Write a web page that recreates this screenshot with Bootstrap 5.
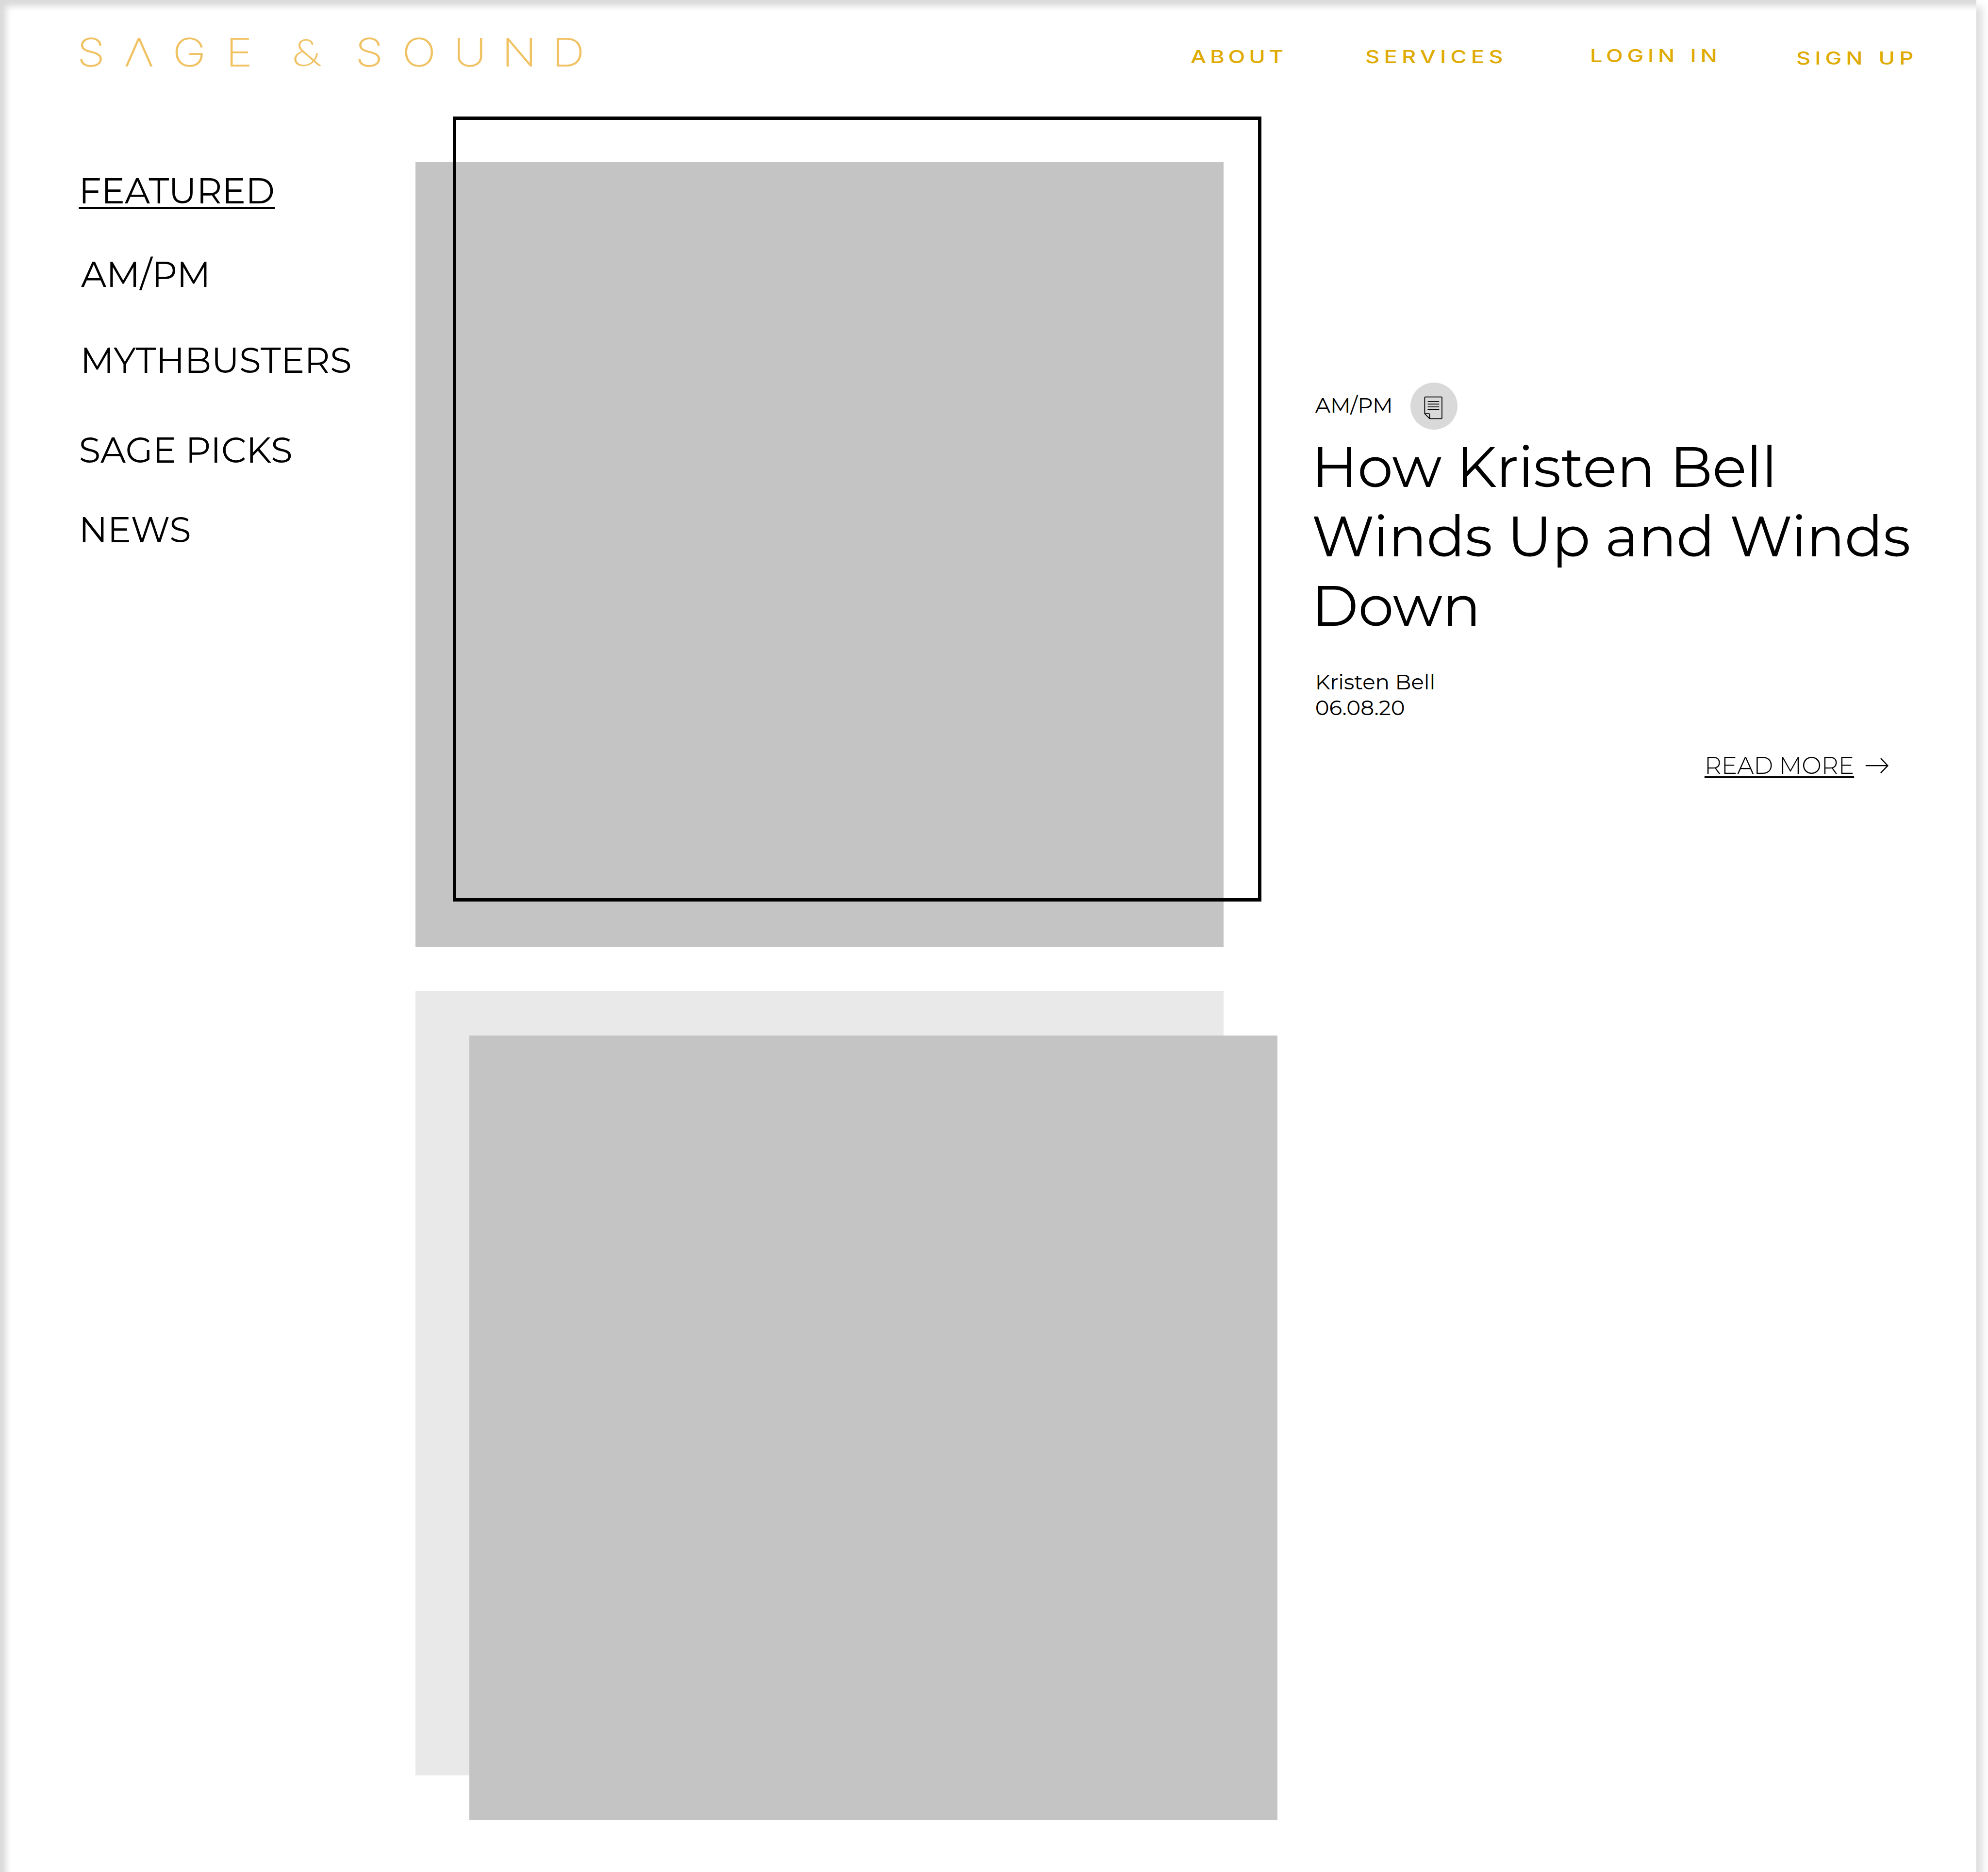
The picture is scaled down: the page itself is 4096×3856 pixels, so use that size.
<!DOCTYPE html>
<html lang="en">
<head>
<meta charset="utf-8">
<meta name="viewport" content="width=device-width, initial-scale=1">
<title>Sage &amp; Sound</title>
<link href="https://cdn.jsdelivr.net/npm/bootstrap@5.3.0/dist/css/bootstrap.min.css" rel="stylesheet">
<style>
  html { font-size: 80.789px; }
  body { font-family: Montserrat, Inter, "Liberation Sans", sans-serif; font-size: .54rem; line-height: .66rem; color: #000; background: #fff; height: 3856px; overflow: hidden; }
  .page-clip { height: 3856px; }
  .sheet { width: 50.4rem; height: 49rem; background: #fff; box-shadow: .15rem .17rem .2rem rgba(0,0,0,.15), inset .16rem .16rem .16rem rgba(0,0,0,.15); }
  .topbar { height: 2.97rem; }
  .brand { width: 13.2rem; height: 1.1rem; margin: .8rem 0 0 1.9rem; overflow: visible; }
  .menu-top { margin-left: 15.26rem; padding-top: 1.175rem; font: 500 .45rem/.5rem Inter, "Liberation Sans", sans-serif; }
  .menu-top .nav-link { padding: 0; color: #dfab00; white-space: nowrap; transform: scaleX(1.25); transform-origin: 0 0; letter-spacing: .09rem; }
  .menu-top .m-about { width: 4.46rem; margin-top: .03rem; letter-spacing: .077rem; }
  .menu-top .m-services { width: 5.736rem; margin-top: .03rem; }
  .menu-top .m-login { width: 5.254rem; word-spacing: .03rem; letter-spacing: .085rem; }
  .menu-top .m-signup { width: 3.1rem; margin-top: .06rem; letter-spacing: .088rem; word-spacing: .03rem; }
  .side { width: 10.6rem; padding: 1.345rem 0 0 2.01rem; font-size: .9rem; line-height: 1.1rem; }
  .side .nav-link { padding: 0; color: #000; }
  .side .s-ampm { margin: 1.03rem 0 0 .057rem; }
  .side .s-myth { margin: 1.09rem 0 0 .04rem; }
  .side .s-picks { margin-top: 1.19rem; }
  .side .s-news { margin-top: .935rem; }
  .side .current { text-decoration: underline; text-decoration-thickness: .05rem; text-underline-offset: .09rem; text-decoration-skip-ink: none; }
  .gallery { width: 22.85rem; gap: 1.11rem; }
  .photo-pair { display: grid; width: 21.57rem; height: 21.18rem; }
  .photo-pair > * { grid-area: 1 / 1; width: 20.6rem; height: 20.01rem; }
  .photo-pair > .outline { width: 20.62rem; border: .09rem solid #000; }
  .photo-pair.second { width: 21.975rem; height: 21.15rem; }
  .fill-mid { background: #c4c4c4; }
  .fill-pale { background: #e9e9e9; }
  .story { width: 16.5rem; padding-top: 6.78rem; }
  .kicker { height: 1.2rem; margin-left: .09rem; }
  .kicker .label { width: 2.43rem; margin-top: -.028rem; }
  .kind { width: 1.2rem; height: 1.2rem; }
  .headline { font-size: 1.44rem; line-height: 1.77rem; font-weight: 400; margin: .07rem 0 .725rem; }
  .byline { margin-left: .09rem; }
  .more { margin: .785rem 0 0 10.02rem; font-size: .6rem; font-weight: 300; line-height: .73rem; }
  .more a { color: #000; text-decoration: underline; text-decoration-thickness: .037rem; text-underline-offset: .06rem; text-decoration-skip-ink: none; }
  .more svg { width: .62rem; height: .4rem; margin-left: .28rem; }
</style>
</head>
<body>
<div class="page-clip overflow-hidden">
<div class="sheet">
  <header class="topbar d-flex align-items-start">
    <svg class="brand flex-shrink-0" viewBox="190 80 1320 110" role="img" aria-label="Sage &amp; Sound">
      <text transform="scale(1.17 1)" y="167.5" text-anchor="middle" font-family="Inter, Lato, sans-serif" font-weight="100" font-size="97" fill="#f0c264" stroke="#f0c264" stroke-width="2.6" x="199 303.4 413.2 521.5 599 669.6 735 805.5 913.7 1024.8 1132.5 1239.5">SΛGE <tspan font-family="Lato, sans-serif" font-weight="300" font-size="94" stroke="none">&amp;</tspan> SOUND</text>
    </svg>
    <nav class="menu-top nav flex-nowrap align-items-start">
      <a class="nav-link m-about" href="#">ABOUT</a>
      <a class="nav-link m-services" href="#">SERVICES</a>
      <a class="nav-link m-login" href="#">LOGIN IN</a>
      <a class="nav-link m-signup" href="#">SIGN UP</a>
    </nav>
  </header>
  <main class="d-flex align-items-start">
    <nav class="side nav flex-column flex-shrink-0 align-items-start">
      <a class="nav-link current" href="#">FEATURED</a>
      <a class="nav-link s-ampm" href="#">AM/PM</a>
      <a class="nav-link s-myth" href="#">MYTHBUSTERS</a>
      <a class="nav-link s-picks" href="#">SAGE PICKS</a>
      <a class="nav-link s-news" href="#">NEWS</a>
    </nav>
    <section class="gallery d-flex flex-column flex-shrink-0">
      <div class="photo-pair">
        <div class="fill-mid align-self-end"></div>
        <div class="outline ms-auto"></div>
      </div>
      <div class="photo-pair second">
        <div class="fill-pale"></div>
        <div class="fill-mid align-self-end ms-auto"></div>
      </div>
    </section>
    <article class="story flex-shrink-0">
      <div class="kicker d-flex align-items-center">
        <span class="label">AM/PM</span>
        <svg class="kind" viewBox="0 0 120 120" fill="none" stroke="#000" stroke-width="2.2" stroke-linejoin="round" stroke-linecap="round">
          <circle cx="60" cy="60" r="60" fill="#d9d9d9" stroke="none"/>
          <path d="M38 36.8H78.7Q80.4 36.8 80.4 38.5V90.3Q80.4 92 78.7 92H49L36.4 79.4V38.5Q36.4 36.8 38 36.8ZM36.4 79.4H47.3Q49 79.4 49 81.1V92"/>
          <path d="M44.8 48H72.6M44.8 55H72.6M44.8 62H72.6M44.8 69H72.6"/>
        </svg>
      </div>
      <h1 class="headline">How Kristen Bell<br>Winds Up and Winds<br>Down</h1>
      <div class="byline">Kristen Bell<br>06.08.20</div>
      <div class="more d-flex align-items-center">
        <a href="#">READ MORE</a>
        <svg viewBox="0 0 62 40" fill="none" stroke="#000" stroke-width="3"><path d="M1 20H58M39.5 1.5L57.5 20 39.5 38.5"/></svg>
      </div>
    </article>
  </main>
</div>
</div>
<script src="https://cdn.jsdelivr.net/npm/bootstrap@5.3.0/dist/js/bootstrap.bundle.min.js"></script>
</body>
</html>
